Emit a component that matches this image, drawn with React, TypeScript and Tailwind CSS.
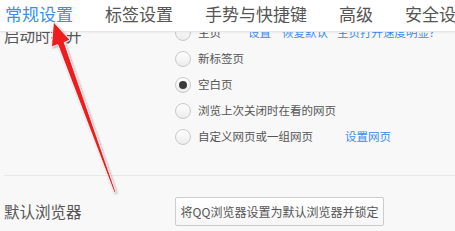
import React from "react";

const tabs = ["常规设置", "标签设置", "手势与快捷键", "高级", "安全设置"];

const startOptions = [
  { label: "新标签页", checked: false },
  { label: "空白页", checked: true },
  { label: "浏览上次关闭时在看的网页", checked: false },
];

function Radio({ checked }: { checked?: boolean }) {
  return (
    <span className="w-[16px] h-[16px] rounded-full border border-[#c9c9c9] bg-gradient-to-b from-[#ffffff] to-[#ececec] flex items-center justify-center shrink-0">
      {checked && <span className="w-[8px] h-[8px] rounded-full bg-[#3a3a3a]" />}
    </span>
  );
}

function Arrow() {
  return (
    <svg
      className="absolute left-0 top-0 pointer-events-none"
      width="455"
      height="231"
      viewBox="0 0 455 231"
    >
      <defs>
        <filter id="sh" x="-20%" y="-20%" width="140%" height="140%">
          <feDropShadow dx="1" dy="1" stdDeviation="1.2" floodColor="#000" floodOpacity="0.35" />
        </filter>
      </defs>
      <g filter="url(#sh)" fill="#ee1c1c" stroke="#ffffff" strokeWidth="0.8" strokeLinejoin="round">
        <polygon points="53.5,22 70,40 64.2,42.4 115.8,192 114.2,192.5 57.8,44.6 51.5,47" />
      </g>
    </svg>
  );
}

export default function App() {
  return (
    <div
      className="relative w-[455px] h-[231px] overflow-hidden bg-[#f8f8f8] text-[#555555]"
      style={{ fontFamily: '"Noto Sans CJK SC", "Noto Sans", sans-serif' }}
    >
      {/* 启动时打开 */}
      <div className="flex pt-[20px]">
        <div className="w-[175px] pl-[4px] pt-[2px] text-[15.5px] leading-[26px] shrink-0">启动时打开</div>
        <div className="flex flex-col">
          <div className="h-[26px] flex items-center gap-[7px] text-[11.5px]">
            <Radio />
            <span className="w-[43px]">主页</span>
            <span className="text-[#3b8cef] w-[27px]">设置</span>
            <span className="text-[#3b8cef] w-[48px]">恢复默认</span>
            <span className="text-[#3b8cef] whitespace-nowrap">主页打开速度明显?</span>
          </div>
          {startOptions.map((o) => (
            <div key={o.label} className="h-[26px] flex items-center gap-[7px] text-[11.5px]">
              <Radio checked={o.checked} />
              <span>{o.label}</span>
            </div>
          ))}
          <div className="h-[26px] flex items-center gap-[7px] text-[11.5px]">
            <Radio />
            <span className="w-[140px]">自定义网页或一组网页</span>
            <span className="text-[#3b8cef]">设置网页</span>
          </div>
        </div>
      </div>

      <div className="ml-[4px] mt-[25px] border-t border-[#e8e8e8]" />

      {/* 默认浏览器 */}
      <div className="flex items-center pt-[21px]">
        <div className="w-[175px] pl-[4px] text-[15.5px] shrink-0">默认浏览器</div>
        <button className="w-[209px] h-[29px] border border-[#cccccc] rounded-[2px] bg-gradient-to-b from-[#ffffff] to-[#f6f6f6] text-[12px] text-[#555555]">
          将QQ浏览器设置为默认浏览器并锁定
        </button>
      </div>

      {/* 顶部标签栏 */}
      <div className="absolute left-0 top-0 w-full h-[32px] bg-white border-b border-[#e4e4e4] shadow-[0_1px_2px_rgba(0,0,0,0.05)] flex items-center gap-[32px] pl-[5px] whitespace-nowrap">
        {tabs.map((t, i) => (
          <span
            key={t}
            className={`text-[17px] leading-none pb-[6px] pt-[1px] ${i === 0 ? "text-[#3c8fe8]" : "text-[#555555]"}`}
          >
            {t}
          </span>
        ))}
      </div>

      <Arrow />
    </div>
  );
}
